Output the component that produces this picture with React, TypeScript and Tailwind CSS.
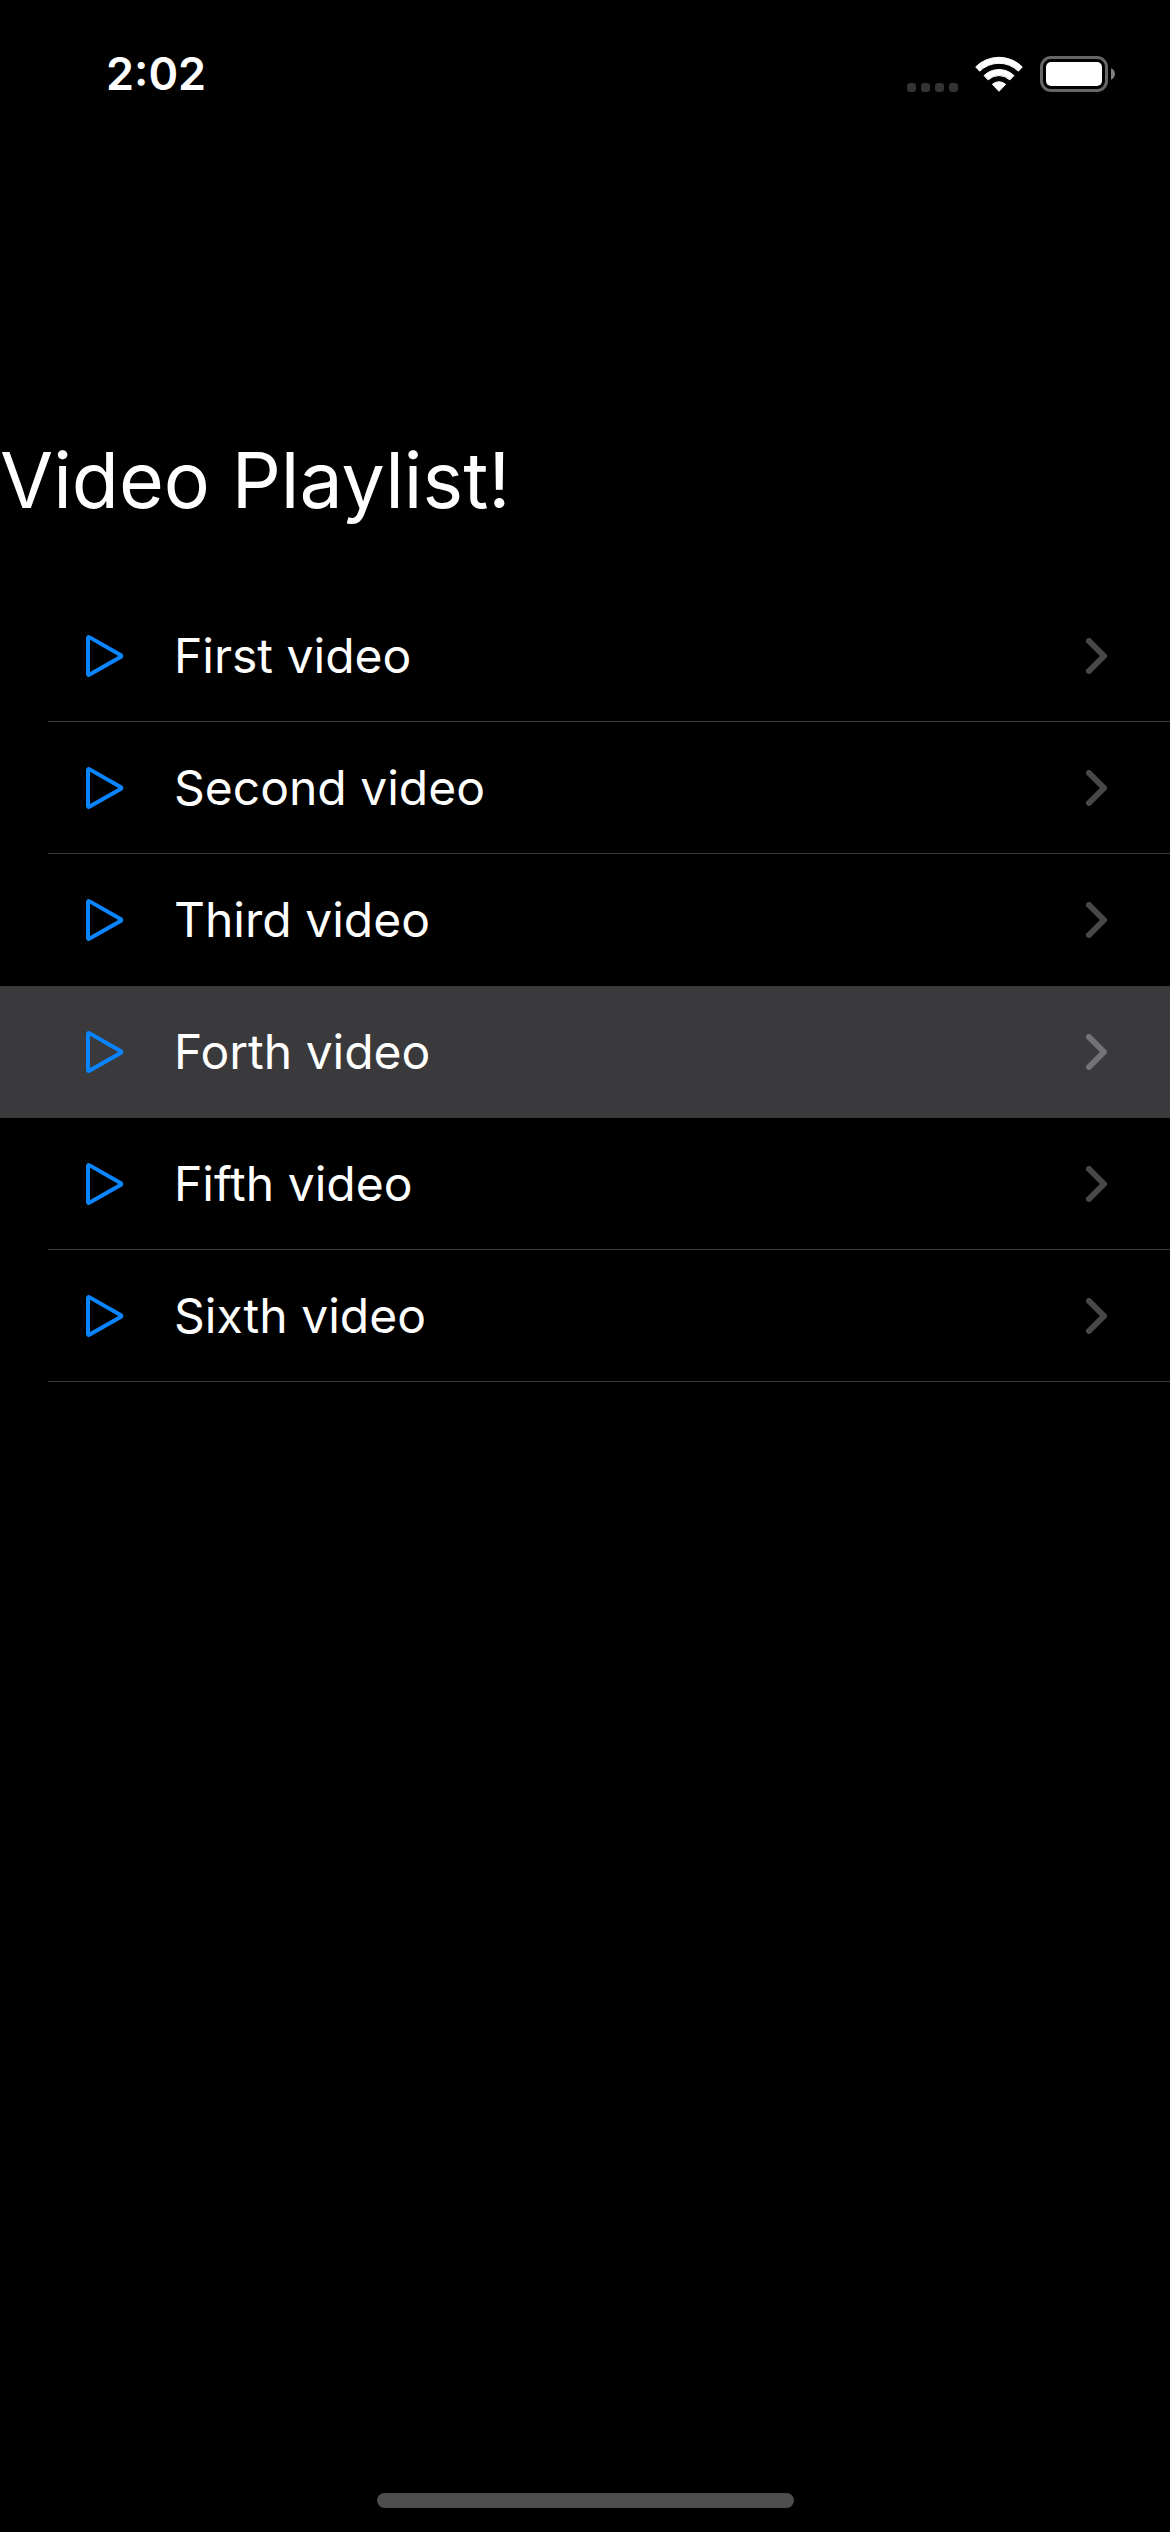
import { useState } from "react";

const videos = [
  "First video",
  "Second video",
  "Third video",
  "Forth video",
  "Fifth video",
  "Sixth video",
];

function WifiIcon() {
  return (
    <svg className="h-9 w-12" viewBox="0 0 48 36" fill="#fff" stroke="#fff" strokeWidth="1" strokeLinejoin="round" aria-label="Wi-Fi">
      <path d="M.7 10.9A33 33 0 0 1 47.3 10.9L43.3 15.2A27.5 27.5 0 0 0 4.7 15.2Z" />
      <path d="M9 19.6A21.5 21.5 0 0 1 39 19.6L34.8 23.9A15.6 15.6 0 0 0 13.2 23.9Z" />
      <path d="M17.4 28.3A9.8 9.8 0 0 1 30.6 28.3L24 35.3Z" />
    </svg>
  );
}

function BatteryIcon() {
  return (
    <svg className="h-9 w-[75px]" viewBox="0 0 75 36" aria-label="Battery full">
      <rect x="1.5" y="1.5" width="65" height="33" rx="9.5" fill="none" stroke="#666" strokeWidth="3" />
      <rect x="6" y="6" width="56" height="24" rx="5" fill="#fff" />
      <path d="M71 12.3C73.4 13.3 75 15.5 75 18S73.4 22.7 71 23.7Z" fill="#808080" />
    </svg>
  );
}

function PlayIcon() {
  return (
    <svg className="h-[42px] w-[38px]" viewBox="0 0 38 42" fill="none" stroke="#0a84ff" strokeWidth="4" strokeLinejoin="round" aria-hidden="true">
      <path d="M2 3.3Q2 1.4 3.7 2.4L34.6 20Q36.200 21 34.6 22L3.7 39.6Q2 40.6 2 38.7Z" />
    </svg>
  );
}

function ChevronIcon() {
  return (
    <svg className="h-9 w-[21px]" viewBox="0 0 21 36" fill="none" stroke="currentColor" strokeWidth="6" strokeLinecap="round" strokeLinejoin="round" aria-hidden="true">
      <path d="M3 3L18 18L3 33" />
    </svg>
  );
}

export default function App() {
  const [selected, setSelected] = useState(3);

  return (
    <div className="flex min-h-screen flex-col bg-black font-['Inter',sans-serif] text-white">
      <header className="flex items-center justify-between pt-[46px] pr-[55px] pl-[106px]">
        <time className="text-[45px] leading-[56px] font-semibold">2:02</time>
        <div className="flex items-center">
          <div className="mr-[17px] flex gap-[5px] self-end">
            <span className="size-[9px] rounded-[3px] bg-[#333]" />
            <span className="size-[9px] rounded-[3px] bg-[#333]" />
            <span className="size-[9px] rounded-[3px] bg-[#333]" />
            <span className="size-[9px] rounded-[3px] bg-[#333]" />
          </div>
          <WifiIcon />
          <div className="ml-[17px]">
            <BatteryIcon />
          </div>
        </div>
      </header>

      <main className="flex-1 pt-[328px]">
        <h1 className="text-[77px] leading-[100px]">Video Playlist!</h1>
        <ul className="mt-[60px]">
          {videos.map((title, i) => (
            <li key={title}>
              <button
                type="button"
                onClick={() => setSelected(i)}
                className={
                  i === selected
                    ? "flex h-[132px] w-full bg-[#3a3a3c] pl-12 text-[#727277]"
                    : "flex h-[132px] w-full pl-12 text-[#48484a]"
                }
              >
                <span
                  className={
                    i === selected || i + 1 === selected
                      ? "flex h-full flex-1 items-center border-b border-transparent pr-[63px] pl-[38px]"
                      : "flex h-full flex-1 items-center border-b border-[#38383a] pr-[63px] pl-[38px]"
                  }
                >
                  <PlayIcon />
                  <span className="ml-[50px] flex-1 text-left text-[48px] leading-[60px] text-white">
                    {title}
                  </span>
                  <ChevronIcon />
                </span>
              </button>
            </li>
          ))}
        </ul>
      </main>

      <footer className="flex justify-center pb-6">
        <div className="h-[15px] w-[417px] rounded-full bg-[#4d4d4d]" />
      </footer>
    </div>
  );
}
